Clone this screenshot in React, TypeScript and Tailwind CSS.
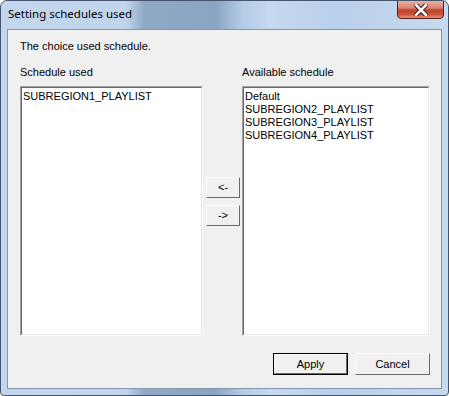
const scheduleUsed = ["SUBREGION1_PLAYLIST"];
const availableSchedule = [
  "Default",
  "SUBREGION2_PLAYLIST",
  "SUBREGION3_PLAYLIST",
  "SUBREGION4_PLAYLIST",
];

const ListBox = ({ items, width }: { items: string[]; width: string }) => {
  return (
    <div
      className={`${width} h-[250px] border border-t-[#a0a0a0] border-l-[#a0a0a0] border-r-white border-b-white`}
    >
      <div className="h-full bg-white border border-t-[#696969] border-l-[#696969] border-r-[#e3e3e3] border-b-[#e3e3e3] px-[1px] pt-[2px]">
        {items.map((item) => (
          <p key={item} className="h-[13px] leading-[13px] text-black">
            {item}
          </p>
        ))}
      </div>
    </div>
  );
};

const ClassicButton = ({
  label,
  className,
  isDefault,
}: {
  label: string;
  className: string;
  isDefault?: boolean;
}) => {
  return (
    <button
      className={`${className} ${
        isDefault ? "border border-black" : ""
      } bg-[#f0f0f0] p-0`}
    >
      <span className="flex h-full w-full items-center justify-center border border-t-white border-l-white border-r-[#696969] border-b-[#696969] text-black">
        {label}
      </span>
    </button>
  );
};

const App = () => {
  return (
    <div className="w-[449px] h-[396px] flex flex-col rounded-t-[7px] rounded-b-[4px] border border-[#44546c] bg-[linear-gradient(90deg,#c2d7ee_0%,#c0d5ec_28%,#8fa9c6_32%,#8aa5c3_48%,#b3cbe5_54%,#c5d9ef_60%,#b9d0ea_75%,#c6daef_100%)] overflow-hidden">
      <header className="h-[28px] flex items-start justify-between">
        <p className="pl-[7px] pt-[5px] text-[11.5px] leading-[16px] text-black font-['Segoe_UI','Noto_Sans',sans-serif]">
          Setting schedules used
        </p>
        <button className="mr-[4px] w-[47px] h-[19px] -mt-[1px] rounded-b-[4px] border border-[#5b1e16] bg-[linear-gradient(180deg,#eab0a2_0%,#d98472_42%,#c2442b_52%,#c8513a_78%,#e3937a_100%)] flex items-center justify-center">
          <svg width="14" height="12" viewBox="0 0 14 12">
            <path
              d="M2 1 L12 11 M12 1 L2 11"
              stroke="#3b1a14"
              strokeWidth="4.5"
              strokeLinecap="square"
            />
            <path
              d="M2 1 L12 11 M12 1 L2 11"
              stroke="#ffffff"
              strokeWidth="2.5"
              strokeLinecap="square"
            />
          </svg>
        </button>
      </header>

      <main className="mx-[6px] mb-[6px] flex-1 border border-[#8496ae] bg-[#f0f0f0] pl-[12px] pt-[10px] flex flex-col text-[11px] font-['Microsoft_Sans_Serif','Liberation_Sans',Arial,sans-serif] text-black">
        <p className="h-[13px] leading-[13px]">The choice used schedule.</p>

        <div className="mt-[13px] flex">
          <div className="w-[183px] flex flex-col">
            <p className="h-[13px] leading-[13px]">Schedule used</p>
            <div className="mt-[7px]">
              <ListBox items={scheduleUsed} width="w-[183px]" />
            </div>
          </div>

          <div className="w-[39px] pl-[3px] pt-[111px] flex flex-col gap-[7px]">
            <ClassicButton label="<-" className="w-[34px] h-[21px]" />
            <ClassicButton label="->" className="w-[34px] h-[21px]" />
          </div>

          <div className="flex flex-col">
            <p className="h-[13px] leading-[13px]">Available schedule</p>
            <div className="mt-[7px]">
              <ListBox items={availableSchedule} width="w-[188px]" />
            </div>
          </div>
        </div>

        <div className="mt-[17px] flex justify-end gap-[7px] pr-[11px]">
          <ClassicButton label="Apply" className="w-[75px] h-[22px]" isDefault />
          <ClassicButton label="Cancel" className="w-[75px] h-[22px]" />
        </div>
      </main>
    </div>
  );
};

export default App;
